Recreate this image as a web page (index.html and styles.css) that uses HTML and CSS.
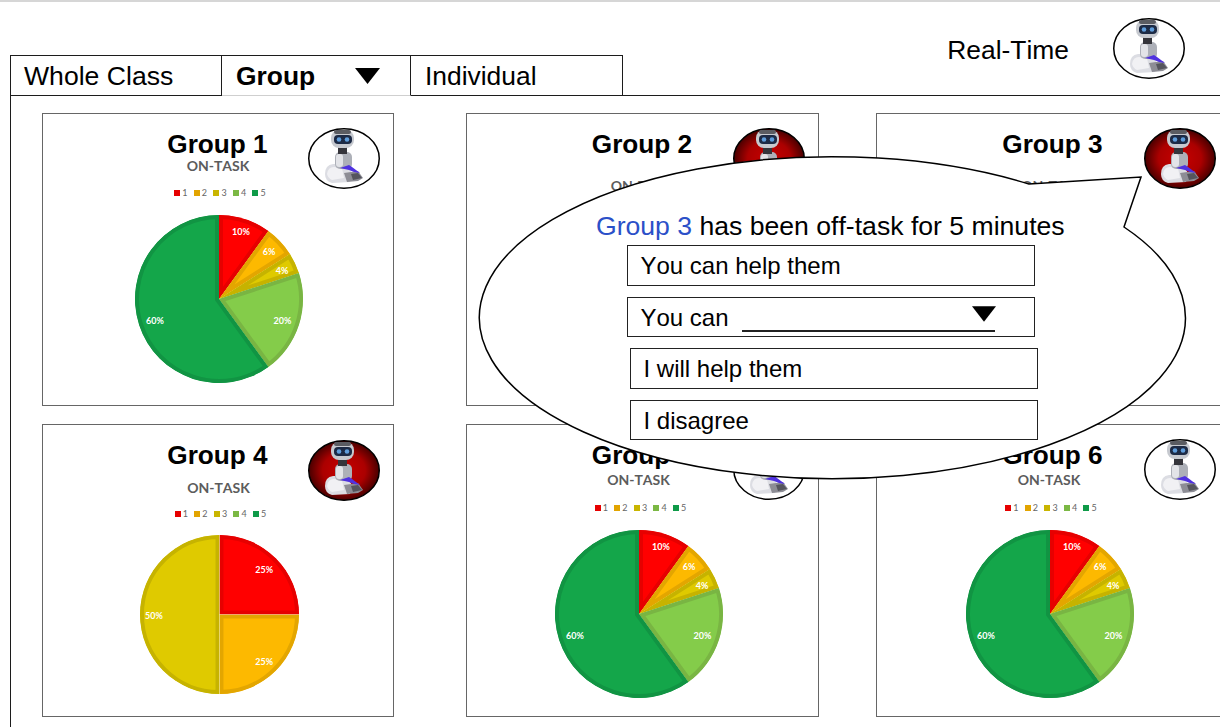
FILE: index.html
```html
<!DOCTYPE html>
<html lang="en">
<head>
<meta charset="utf-8">
<title>Class dashboard</title>
<link rel="stylesheet" href="styles.css">
</head>
<body>
<svg class="defs" aria-hidden="true">
  <defs>
    <radialGradient id="alert-bg" cx="50%" cy="50%" r="55%">
      <stop offset="0" stop-color="#c80000"/>
      <stop offset="0.55" stop-color="#ab0000"/>
      <stop offset="1" stop-color="#300000"/>
    </radialGradient>
    <filter id="soft" x="-10%" y="-10%" width="120%" height="120%"><feGaussianBlur stdDeviation="0.55"/></filter>
    <symbol id="robot" viewBox="0 0 72 61">
      <g filter="url(#soft)">
        <path d="M17 46 Q17 37 25 36 L38 36 L44 45 L42 54 L24 55 Q17 53 17 46 Z" fill="#dcdde3"/>
        <path d="M19 46 Q20 39 26 39 L34 40 L36 50 L24 52 Q20 50 19 46 Z" fill="#f1f1f4"/>
        <path d="M36 45 L50 43 L55 50 L50 53 L39 54 Z" fill="#8d8d95"/>
        <path d="M43 46 L50 45 L54 50 L45 52 Z" fill="#55555d"/>
        <rect x="27" y="24" width="17" height="17" rx="5" fill="#adb0b8"/>
        <rect x="28" y="26" width="7" height="13" rx="3" fill="#e3e4e8"/>
        <path d="M32 40 L41 37 L44 39 L52 45 L46 44 L41 42 Z" fill="#5030e0"/>
        <rect x="30" y="18" width="9" height="8" fill="#34343a"/>
        <rect x="23" y="2" width="23" height="18" rx="8" fill="#c6c9cf"/>
        <rect x="26" y="2" width="17" height="4" rx="2" fill="#5a5c62"/>
        <rect x="26" y="7" width="18" height="9" rx="4" fill="#1c2a44"/>
        <circle cx="31" cy="11.5" r="2.3" fill="#5f9ddb"/>
        <circle cx="39" cy="11.5" r="2.3" fill="#5f9ddb"/>
      </g>
    </symbol>
    <clipPath id="c10"><path d="M84 84 L84 0 A84 84 0 0 1 133.37 16.04 Z"/></clipPath>
    <clipPath id="c6"><path d="M84 84 L133.37 16.04 A84 84 0 0 1 154.92 38.99 Z"/></clipPath>
    <clipPath id="c4"><path d="M84 84 L154.92 38.99 A84 84 0 0 1 163.89 58.04 Z"/></clipPath>
    <clipPath id="c20"><path d="M84 84 L163.89 58.04 A84 84 0 0 1 133.37 151.96 Z"/></clipPath>
    <clipPath id="c60"><path d="M84 84 L133.37 151.96 A84 84 0 1 1 84 0 Z"/></clipPath>
    <symbol id="pie-main" viewBox="0 0 168 168">
      <path clip-path="url(#c10)" class="s-red" d="M84 84 L84 0 A84 84 0 0 1 133.37 16.04 Z"/>
      <path clip-path="url(#c6)" class="s-orange" d="M84 84 L133.37 16.04 A84 84 0 0 1 154.92 38.99 Z"/>
      <path clip-path="url(#c4)" class="s-yellow" d="M84 84 L154.92 38.99 A84 84 0 0 1 163.89 58.04 Z"/>
      <path clip-path="url(#c20)" class="s-lime" d="M84 84 L163.89 58.04 A84 84 0 0 1 133.37 151.96 Z"/>
      <path clip-path="url(#c60)" class="s-green" d="M84 84 L133.37 151.96 A84 84 0 1 1 84 0 Z"/>
    </symbol>
    <clipPath id="d1"><path d="M80 80 L80 0 A80 80 0 0 1 160 80 Z"/></clipPath>
    <clipPath id="d2"><path d="M80 80 L160 80 A80 80 0 0 1 80 160 Z"/></clipPath>
    <clipPath id="d3"><path d="M80 80 L80 160 A80 80 0 0 1 80 0 Z"/></clipPath>
    <symbol id="pie-alt" viewBox="0 0 160 160">
      <path clip-path="url(#d1)" class="s-red" d="M80 80 L80 0 A80 80 0 0 1 160 80 Z"/>
      <path clip-path="url(#d2)" class="s-orange" d="M80 80 L160 80 A80 80 0 0 1 80 160 Z"/>
      <path clip-path="url(#d3)" class="s-yellow" d="M80 80 L80 160 A80 80 0 0 1 80 0 Z"/>
    </symbol>
  </defs>
</svg>

<div class="topline"></div>

<header class="topbar">
  <nav class="tabs">
    <div class="tab tab-whole">Whole Class</div>
    <div class="tab tab-active">Group
      <svg class="caret-lg" viewBox="0 0 25 16"><path d="M0 0H25L12.5 16Z"/></svg>
    </div>
    <div class="tab tab-ind">Individual</div>
  </nav>
  <div class="realtime">
    <span class="realtime-label">Real-Time</span>
    <svg class="avatar-top" viewBox="0 0 72 61"><ellipse class="ring" cx="36" cy="30.5" rx="35.25" ry="29.75"/><use href="#robot" width="72" height="61"/></svg>
  </div>
</header>

<main class="panel">
  <section class="board">

    <article class="card col-1 layout-a">
      <h2 class="title">Group 1</h2>
      <svg class="avatar" viewBox="0 0 72 61"><ellipse class="ring" cx="36" cy="30.5" rx="35.25" ry="29.75"/><use href="#robot" width="72" height="61"/></svg>
      <div class="sub">ON-TASK</div>
      <ul class="legend">
        <li><i class="k1"></i>1</li><li><i class="k2"></i>2</li><li><i class="k3"></i>3</li><li><i class="k4"></i>4</li><li><i class="k5"></i>5</li>
      </ul>
      <svg class="pie" viewBox="0 0 168 168"><use href="#pie-main" width="168" height="168"/>
        <text x="106" y="19.5">10%</text><text x="134" y="40">6%</text><text x="147" y="58.5">4%</text><text x="147.5" y="108.5">20%</text><text x="20" y="108.5">60%</text>
      </svg>
    </article>

    <article class="card col-2 layout-b">
      <h2 class="title">Group 2</h2>
      <svg class="avatar" viewBox="0 0 72 61"><ellipse class="ring alert" cx="36" cy="30.5" rx="35.25" ry="29.75"/><use href="#robot" width="72" height="61"/></svg>
      <div class="sub">ON-TASK</div>
    </article>

    <article class="card col-3 layout-b">
      <h2 class="title">Group 3</h2>
      <svg class="avatar" viewBox="0 0 72 61"><ellipse class="ring alert" cx="36" cy="30.5" rx="35.25" ry="29.75"/><use href="#robot" width="72" height="61"/></svg>
      <div class="sub">ON-TASK</div>
    </article>

    <article class="card col-1 layout-c">
      <h2 class="title">Group 4</h2>
      <svg class="avatar" viewBox="0 0 72 61"><ellipse class="ring alert" cx="36" cy="30.5" rx="35.25" ry="29.75"/><use href="#robot" width="72" height="61"/></svg>
      <div class="sub">ON-TASK</div>
      <ul class="legend">
        <li><i class="k1"></i>1</li><li><i class="k2"></i>2</li><li><i class="k3"></i>3</li><li><i class="k4"></i>4</li><li><i class="k5"></i>5</li>
      </ul>
      <svg class="pie pie-small" viewBox="0 0 160 160"><use href="#pie-alt" width="160" height="160"/>
        <text x="125" y="38">25%</text><text x="125" y="131">25%</text><text x="14" y="85">50%</text>
      </svg>
    </article>

    <article class="card col-2 layout-d">
      <h2 class="title">Group 5</h2>
      <svg class="avatar" viewBox="0 0 72 61"><ellipse class="ring" cx="36" cy="30.5" rx="35.25" ry="29.75"/><use href="#robot" width="72" height="61"/></svg>
      <div class="sub">ON-TASK</div>
      <ul class="legend">
        <li><i class="k1"></i>1</li><li><i class="k2"></i>2</li><li><i class="k3"></i>3</li><li><i class="k4"></i>4</li><li><i class="k5"></i>5</li>
      </ul>
      <svg class="pie" viewBox="0 0 168 168"><use href="#pie-main" width="168" height="168"/>
        <text x="106" y="19.5">10%</text><text x="134" y="40">6%</text><text x="147" y="58.5">4%</text><text x="147.5" y="108.5">20%</text><text x="20" y="108.5">60%</text>
      </svg>
    </article>

    <article class="card col-3 layout-d">
      <h2 class="title">Group 6</h2>
      <svg class="avatar" viewBox="0 0 72 61"><ellipse class="ring" cx="36" cy="30.5" rx="35.25" ry="29.75"/><use href="#robot" width="72" height="61"/></svg>
      <div class="sub">ON-TASK</div>
      <ul class="legend">
        <li><i class="k1"></i>1</li><li><i class="k2"></i>2</li><li><i class="k3"></i>3</li><li><i class="k4"></i>4</li><li><i class="k5"></i>5</li>
      </ul>
      <svg class="pie" viewBox="0 0 168 168"><use href="#pie-main" width="168" height="168"/>
        <text x="106" y="19.5">10%</text><text x="134" y="40">6%</text><text x="147" y="58.5">4%</text><text x="147.5" y="108.5">20%</text><text x="20" y="108.5">60%</text>
      </svg>
    </article>

  </section>
</main>

<aside class="bubble">
  <svg class="bubble-shape" viewBox="470 150 720 340"><path d="M1030 184 L1142 177 L1125 227 A353 161 0 1 1 1030 184 Z"/></svg>
  <div class="bubble-body">
    <p class="prompt"><span class="prompt-group">Group 3</span> has been off-task for 5 minutes</p>
    <div class="option">You can help them</div>
    <div class="option">You can
      <span class="blank"><svg class="caret-sm" viewBox="0 0 25 16"><path d="M0 0H25L12.5 16Z"/></svg></span>
    </div>
    <div class="option option-shift">I will help them</div>
    <div class="option option-shift">I disagree</div>
  </div>
</aside>
</body>
</html>
```

FILE: styles.css
```css
* { box-sizing: border-box; }

html, body {
  margin: 0;
  padding: 0;
  width: 1220px;
  height: 727px;
  overflow: hidden;
  background: #fff;
  color: #000;
  font-family: "Liberation Sans", Arial, sans-serif;
  font-kerning: none;
}

body { position: relative; }

.defs { position: absolute; width: 0; height: 0; }

.topline { height: 2px; background: #d6d6d6; }

.topbar {
  display: flex;
  justify-content: space-between;
  align-items: flex-start;
  height: 93px;
  padding-left: 10px;
}

.tabs {
  display: flex;
  margin-top: 53px;
  position: relative;
  z-index: 1;
}

.tab {
  display: flex;
  align-items: center;
  justify-content: space-between;
  height: 41px;
  padding-top: 2px;
  border: 1.5px solid #1c1c1c;
  border-left: 0;
  font-size: 26.4px;
  padding-left: 14px;
  background: #fff;
}

.tab-whole { width: 212px; border-left: 1.5px solid #1c1c1c; padding-left: 13px; font-size: 26.6px; }
.tab-active { width: 189px; font-weight: 700; padding-right: 30px; border-bottom-color: #cfcfcf; }
.tab-ind { width: 212px; }

.caret-lg { width: 25px; height: 16px; margin-top: -2px; }
.caret-sm { width: 24px; height: 16px; margin: 0 -1px 8px 0; }

.realtime {
  display: flex;
  align-items: center;
  gap: 44px;
  margin-top: 16px;
  padding-right: 35px;
}

.realtime-label { font-size: 26.4px; padding-top: 3px; }
.avatar-top { width: 72px; height: 61px; }

.ring { fill: #fff; stroke: #000; stroke-width: 1.5; }
.ring.alert { fill: url(#alert-bg); }

.panel {
  margin-left: 10px;
  height: 632px;
  border-top: 1.5px solid #1c1c1c;
  border-left: 1.5px solid #1c1c1c;
}

.board {
  display: grid;
  grid-template-columns: 352px 72px 353px 57.5px 353px;
  grid-auto-rows: 293px;
  row-gap: 18px;
  padding: 17px 0 0 30.5px;
  width: 1230px;
}

.col-1 { grid-column: 1; }
.col-2 { grid-column: 3; }
.col-3 { grid-column: 5; }

.card {
  position: relative;
  display: flex;
  flex-direction: column;
  align-items: center;
  border: 1.5px solid #666;
  padding-top: 14.5px;
}

.title {
  margin: 0;
  font-size: 26.2px;
  line-height: 30px;
  font-weight: 700;
}

.avatar {
  position: absolute;
  top: 13.5px;
  right: 12.5px;
  width: 72px;
  height: 61px;
}

.layout-c .avatar { top: 14.5px; }

.sub {
  font-family: Lato, "Liberation Sans", sans-serif;
  font-weight: 700;
  font-size: 14px;
  line-height: 14px;
  color: #5c5c5c;
}

.legend {
  display: flex;
  gap: 6.3px;
  margin: 0;
  padding: 0;
  list-style: none;
  font-family: Lato, "Liberation Sans", sans-serif;
  font-size: 9px;
  line-height: 10px;
  height: 10px;
  color: #666;
}

.legend li { display: flex; align-items: center; gap: 2px; }
.legend i { display: block; width: 6px; height: 6px; }

.k1 { background: #e60000; }
.k2 { background: #e2a400; }
.k3 { background: #c9b500; }
.k4 { background: #7bb844; }
.k5 { background: #0e9a48; }

.pie { width: 168px; height: 168px; flex: none; overflow: visible; }
.pie-small { width: 159px; height: 159px; }

.pie text {
  font-family: Lato, "Liberation Sans", sans-serif;
  font-weight: 700;
  font-size: 9px;
  fill: #fff;
  text-anchor: middle;
}

.s-red { fill: #ff0000; stroke: #e60000; stroke-width: 8; }
.s-orange { fill: #fdb900; stroke: #e3a600; stroke-width: 8; }
.s-yellow { fill: #dfca00; stroke: #c6b300; stroke-width: 8; }
.s-lime { fill: #84cc4a; stroke: #79b543; stroke-width: 8; }
.s-green { fill: #14a64a; stroke: #119443; stroke-width: 8; }

/* Per-card vertical rhythm */
.layout-a .sub { margin: 0 0 0 1px; }
.layout-a .legend { margin: 15px 0 0 5px; }
.layout-a .pie { margin: 17px 0 0 2px; }

.layout-b .sub { margin-top: 20px; }

.layout-c .sub { margin: 11px 0 0 2px; }
.layout-c .legend { margin: 14px 0 0 6px; }
.layout-c .pie { margin: 16px 0 0 4px; }

.layout-d .sub { margin: 3px 7px 0 0; }
.layout-d .legend { margin: 16px 3px 0 0; }
.layout-d .pie { margin: 17px 6px 0 0; }

/* Speech bubble overlay */
.bubble {
  position: absolute;
  left: 469px;
  top: 150px;
  width: 720px;
  height: 340px;
  z-index: 2;
}

.bubble-shape {
  position: absolute;
  inset: 0;
  width: 720px;
  height: 340px;
}

.bubble-shape path { fill: #fff; stroke: #000; stroke-width: 1.5; stroke-linejoin: miter; }

.bubble-body {
  position: relative;
  display: flex;
  flex-direction: column;
  align-items: flex-start;
  gap: 11px;
  padding: 61px 0 0 158px;
  font-size: 24px;
}

.prompt {
  margin: 0 0 -7px -31px;
  font-size: 26.6px;
  line-height: 30px;
  white-space: nowrap;
}

.prompt-group { color: #2b50c8; }

.option {
  display: flex;
  align-items: center;
  width: 408px;
  height: 40.5px;
  padding: 2px 0 0 12.5px;
  border: 1.5px solid #222;
  background: #fff;
}

.option-shift { margin-left: 3px; }

.blank {
  display: flex;
  justify-content: flex-end;
  align-items: flex-end;
  width: 253px;
  height: 28px;
  margin: 1px 0 0 13px;
  border-bottom: 2px solid #222;
}
```
